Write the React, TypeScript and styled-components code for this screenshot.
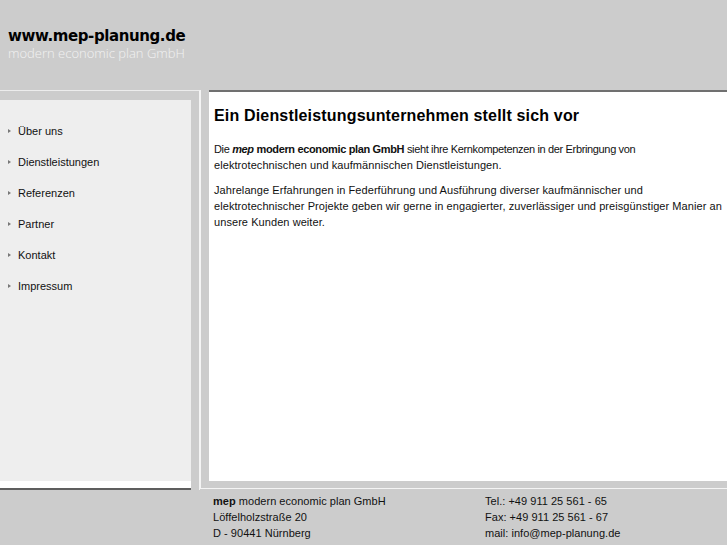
import React from 'react';
import styled, { createGlobalStyle } from 'styled-components';

const GlobalStyle = createGlobalStyle`
  html, body {
    margin: 0;
    padding: 0;
    background: #cccccc;
  }
  body {
    font-family: "Liberation Sans", Arial, sans-serif;
    color: #111;
  }
`;

const Page = styled.div`
  display: flex;
  flex-direction: column;
  height: 545px;
  overflow: hidden;
  background: #cccccc;
`;

const Header = styled.header`
  height: 90px;
  box-sizing: border-box;
  padding: 26px 0 0 8px;
`;

const SiteName = styled.div`
  font-family: "DejaVu Sans", Verdana, sans-serif;
  font-weight: bold;
  font-size: 15px;
  line-height: 21px;
  color: #000;
  letter-spacing: -0.4px;
`;

const Slogan = styled.div`
  font-family: "Open Sans", sans-serif;
  font-weight: 300;
  font-size: 13px;
  line-height: 13px;
  color: #f2f2f2;
`;

const Main = styled.div`
  display: flex;
  align-items: flex-start;
  height: 400px;
`;

const Sidebar = styled.nav`
  width: 200px;
  height: 400px;
  box-sizing: border-box;
  border-top: 1px solid #ececec;
  border-right: 1px solid #f4f4f4;
  padding: 9px 8px 2px 0;
  display: flex;
  flex-direction: column;
`;

const SideBox = styled.div`
  flex: 1;
  background: #eeeeee;
  border-bottom: 7px solid #ffffff;
  box-shadow: 0 2px 0 #5e5e5e;
`;

const Menu = styled.ul`
  list-style: none;
  margin: 0;
  padding: 16px 0 0 0;
`;

const MenuItem = styled.li`
  height: 31px;
  line-height: 31px;
  font-size: 11px;
  color: #111;
  padding-left: 18px;
  position: relative;

  &::before {
    content: '';
    position: absolute;
    left: 8px;
    top: 13px;
    border-left: 3px solid #777;
    border-top: 2.5px solid transparent;
    border-bottom: 2.5px solid transparent;
  }
`;

const Content = styled.main`
  flex: 1;
  height: 399px;
  box-sizing: border-box;
  border-left: 1px solid #f4f4f4;
  border-bottom: 1px solid #f4f4f4;
  padding: 0 0 7px 8px;
  display: flex;
`;

const ContentBox = styled.div`
  flex: 1;
  background: #ffffff;
  border-top: 2px solid #707070;
  padding: 14px 0 0 5px;
`;

const Title = styled.h1`
  margin: 0 0 15px 0;
  font-size: 16px;
  line-height: 20px;
  font-weight: bold;
  letter-spacing: 0.17px;
  color: #000;
`;

const Paragraph = styled.p`
  margin: 0 0 9px 0;
  font-size: 11px;
  line-height: 16px;
  letter-spacing: 0.07px;
  color: #111;
`;

const Line = styled.span<{ $tight?: boolean }>`
  display: block;
  white-space: nowrap;
  letter-spacing: ${props => (props.$tight ? '-0.35px' : 'inherit')};
`;

const Brand = styled.em`
  font-weight: bold;
`;

const Footer = styled.footer`
  display: grid;
  grid-template-columns: 272px auto;
  padding: 3px 0 0 213px;
  font-size: 11px;
  line-height: 16px;
  letter-spacing: 0.03px;
  color: #111;
`;

const FooterCol = styled.div`
  display: flex;
  flex-direction: column;
`;

const menu = ['Über uns', 'Dienstleistungen', 'Referenzen', 'Partner', 'Kontakt', 'Impressum'];

const App: React.FC = () => {
  return (
    <Page>
      <GlobalStyle />
      <Header>
        <SiteName>www.mep-planung.de</SiteName>
        <Slogan>modern economic plan GmbH</Slogan>
      </Header>
      <Main>
        <Sidebar>
          <SideBox>
            <Menu>
              {menu.map(item => (
                <MenuItem key={item}>{item}</MenuItem>
              ))}
            </Menu>
          </SideBox>
        </Sidebar>
        <Content>
          <ContentBox>
            <Title>Ein Dienstleistungsunternehmen stellt sich vor</Title>
            <Paragraph>
              <Line $tight>
                Die <Brand>mep</Brand> <b>modern economic plan GmbH</b> sieht ihre Kernkompetenzen in der Erbringung von
              </Line>
              <Line>elektrotechnischen und kaufmännischen Dienstleistungen.</Line>
            </Paragraph>
            <Paragraph>
              <Line>Jahrelange Erfahrungen in Federführung und Ausführung diverser kaufmännischer und</Line>
              <Line>elektrotechnischer Projekte geben wir gerne in engagierter, zuverlässiger und preisgünstiger Manier an</Line>
              <Line>unsere Kunden weiter.</Line>
            </Paragraph>
          </ContentBox>
        </Content>
      </Main>
      <Footer>
        <FooterCol>
          <span><b>mep</b> modern economic plan GmbH</span>
          <span>Löffelholzstraße 20</span>
          <span>D - 90441 Nürnberg</span>
        </FooterCol>
        <FooterCol>
          <span>Tel.: +49 911 25 561 - 65</span>
          <span>Fax: +49 911 25 561 - 67</span>
          <span>mail: info@mep-planung.de</span>
        </FooterCol>
      </Footer>
    </Page>
  );
};

export default App;
